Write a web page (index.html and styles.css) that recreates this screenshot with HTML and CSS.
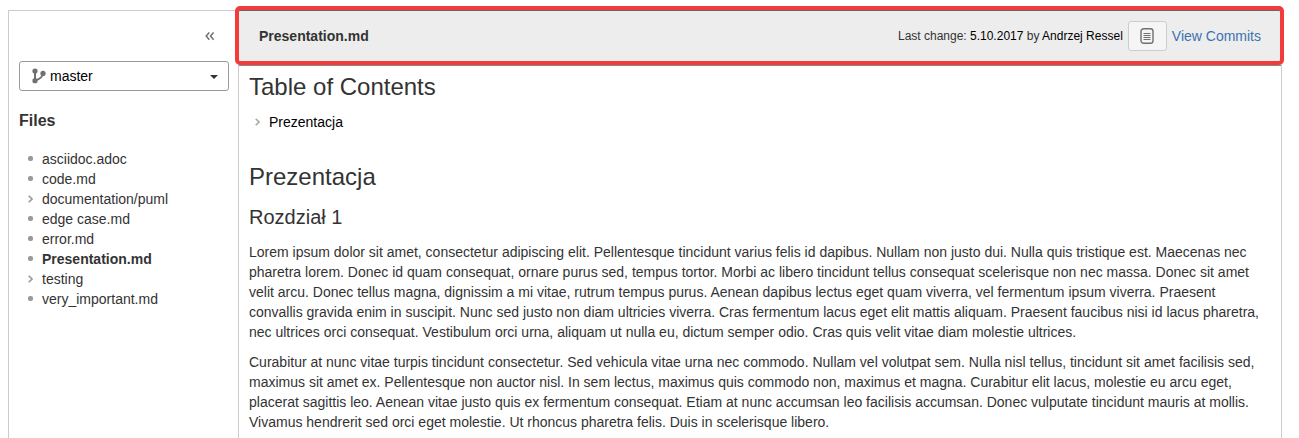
FILE: index.html
```html
<!DOCTYPE html>
<html lang="pl">
<head>
<meta charset="utf-8">
<title>Presentation.md</title>
<link rel="stylesheet" href="styles.css">
</head>
<body>
<div class="frame">
  <aside class="sidebar">
    <div class="collapse-row">
      <svg class="collapse" width="10" height="10" viewBox="0 0 10 10"><path d="M4.3 1.5 1.2 5l3.1 3.8M8.6 1.5 5.5 5l3.1 3.8"/></svg>
    </div>
    <button class="branch">
      <svg class="branch-icon" width="14" height="16" viewBox="0 0 14 16"><path d="M3 3v10M3.4 12.4C8 11.3 10.3 9.6 10.8 5.5"/><circle cx="3" cy="3" r="2.6"/><circle cx="3" cy="12.7" r="2.6"/><circle cx="11" cy="5.4" r="2.6"/></svg>
      <span class="branch-name">master</span>
      <span class="caret"></span>
    </button>
    <h3 class="files-title">Files</h3>
    <ul class="files">
      <li><i class="dot"></i>asciidoc.adoc</li>
      <li><i class="dot"></i>code.md</li>
      <li><svg class="arrow" width="5" height="8" viewBox="0 0 5 8"><path d="M.7.8 4 4 .7 7.2"/></svg>documentation/puml</li>
      <li><i class="dot"></i>edge case.md</li>
      <li><i class="dot"></i>error.md</li>
      <li class="current"><i class="dot"></i>Presentation.md</li>
      <li><svg class="arrow" width="5" height="8" viewBox="0 0 5 8"><path d="M.7.8 4 4 .7 7.2"/></svg>testing</li>
      <li><i class="dot"></i>very_important.md</li>
    </ul>
  </aside>
  <main class="main">
    <header class="bar">
      <strong class="bar-title">Presentation.md</strong>
      <span class="change">Last change: <b>5.10.2017</b> by <b>Andrzej Ressel</b></span>
      <button class="source">
        <svg width="14" height="16" viewBox="0 0 14 16"><rect x="1" y=".7" width="12" height="14.6" rx="2.6"/><path class="lines" d="M3.5 5.5h7M3.5 7.5h7M3.5 9.5h7M3.5 11.5h7"/></svg>
      </button>
      <a class="commits">View Commits</a>
    </header>
    <article class="doc">
      <h1>Table of Contents</h1>
      <div class="toc"><svg class="arrow light" width="5" height="8" viewBox="0 0 5 8"><path d="M.7.8 4 4 .7 7.2"/></svg>Prezentacja</div>
      <h1>Prezentacja</h1>
      <h2>Rozdział 1</h2>
      <p>Lorem ipsum dolor sit amet, consectetur adipiscing elit. Pellentesque tincidunt varius felis id dapibus. Nullam non justo dui. Nulla quis tristique est. Maecenas nec<br>pharetra lorem. Donec id quam consequat, ornare purus sed, tempus tortor. Morbi ac libero tincidunt tellus consequat scelerisque non nec massa. Donec sit amet<br>velit arcu. Donec tellus magna, dignissim a mi vitae, rutrum tempus purus. Aenean dapibus lectus eget quam viverra, vel fermentum ipsum viverra. Praesent<br>convallis gravida enim in suscipit. Nunc sed justo non diam ultricies viverra. Cras fermentum lacus eget elit mattis aliquam. Praesent faucibus nisi id lacus pharetra,<br>nec ultrices orci consequat. Vestibulum orci urna, aliquam ut nulla eu, dictum semper odio. Cras quis velit vitae diam molestie ultrices.</p>
      <p>Curabitur at nunc vitae turpis tincidunt consectetur. Sed vehicula vitae urna nec commodo. Nullam vel volutpat sem. Nulla nisl tellus, tincidunt sit amet facilisis sed,<br>maximus sit amet ex. Pellentesque non auctor nisl. In sem lectus, maximus quis commodo non, maximus et magna. Curabitur elit lacus, molestie eu arcu eget,<br>placerat sagittis leo. Aenean vitae justo quis ex fermentum consequat. Etiam at nunc accumsan leo facilisis accumsan. Donec vulputate tincidunt mauris at mollis.<br>Vivamus hendrerit sed orci eget molestie. Ut rhoncus pharetra felis. Duis in scelerisque libero.</p>
    </article>
  </main>
  <div class="highlight"></div>
</div>
</body>
</html>
```
FILE: styles.css
```css
* { box-sizing: border-box; }
body {
  margin: 0;
  height: 438px;
  overflow: hidden;
  padding: 10px 17px 0 8px;
  background: #fff;
  color: #333;
  font: 14px/20px "Liberation Sans", Arial, sans-serif;
}
button { font: inherit; margin: 0; }
.frame {
  position: relative;
  display: flex;
  height: 440px;
  border: 1px solid #ccc;
}
.sidebar {
  flex: 0 0 230px;
  padding: 0 9px 0 10px;
  border-right: 1px solid #ccc;
}
.collapse-row {
  display: flex;
  justify-content: flex-end;
  align-items: center;
  height: 50px;
  padding-right: 14px;
}
.collapse { fill: none; stroke: #707070; stroke-width: 1.5; }
.branch {
  display: flex;
  align-items: center;
  width: 210px;
  height: 30px;
  padding: 0 10px 0 12px;
  border: 1px solid #999;
  border-radius: 3px;
  background: #fff;
  color: #000;
}
.branch-icon { margin-top: -1px; fill: #707070; }
.branch-icon path { fill: none; stroke: #707070; stroke-width: 2; }
.branch-name { flex: 1; margin-left: 4px; text-align: left; }
.caret {
  margin-top: 2px;
  border: 4px solid transparent;
  border-top-color: #333;
  border-bottom: 0;
}
.files-title {
  margin: 20px 0 0;
  font-size: 16px;
  line-height: 20px;
}
.files { margin: 18px 0 0; padding: 0; list-style: none; }
.files li { display: flex; align-items: center; height: 20px; }
.dot {
  width: 5px;
  height: 5px;
  margin: -1px 9px 0;
  border-radius: 2px;
  background: #999;
}
.arrow { margin: 0 9px; fill: none; stroke: #999; stroke-width: 1.6; }
.light { margin: 0 9px 0 6px; stroke: #aaa; }
.current { font-weight: bold; }
.main { flex: 1; min-width: 0; }
.bar {
  display: flex;
  align-items: center;
  height: 55px;
  padding: 0 20px 4px;
  border-bottom: 1px solid #888;
  background: #ededed;
}
.bar-title { flex: 1; }
.change { font-size: 12px; }
.change b { color: #000; font-weight: normal; }
.source {
  display: flex;
  align-items: center;
  justify-content: center;
  width: 39px;
  height: 30px;
  margin: 0 5px;
  padding: 0;
  border: 1px solid #ccc;
  border-radius: 3px;
  background: #f5f5f5;
}
.source svg { fill: none; stroke: #707070; stroke-width: 1.4; }
.source .lines { stroke-width: 1; }
.commits { color: #3b73af; }
.doc { padding: 6px 10px 0; white-space: nowrap; }
h1 { margin: 0; font-size: 24px; font-weight: normal; line-height: 30px; }
h2 { margin: 10px 0 0; font-size: 20px; font-weight: normal; line-height: 30px; }
.toc {
  display: flex;
  align-items: center;
  height: 20px;
  margin: 10px 0 30px;
  color: #000;
}
p { margin: 10px 0 0; }
.highlight {
  position: absolute;
  top: -5px;
  left: 226px;
  width: 1049px;
  height: 59px;
  border: 4px solid #f23c3c;
  border-radius: 5px;
  box-shadow: inset 0 1px #666;
}
```
